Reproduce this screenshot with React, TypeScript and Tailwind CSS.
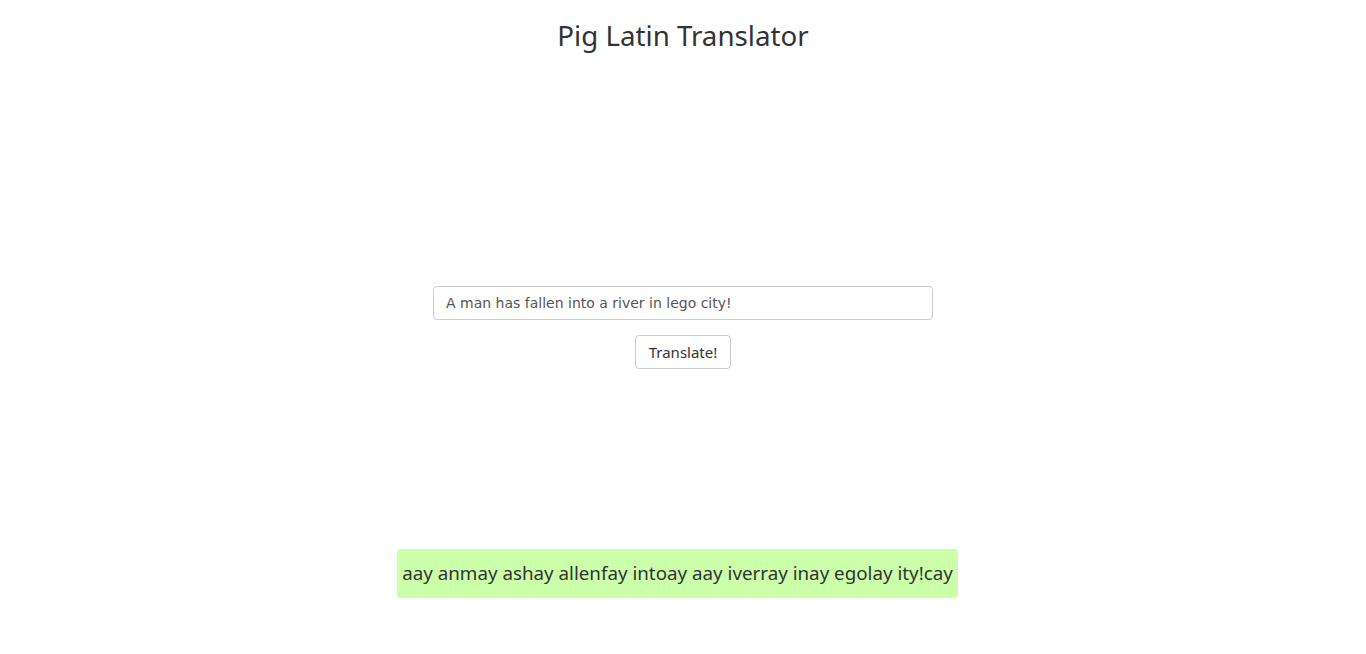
import React from "react";

export default function App() {
  const segoe = { fontFamily: '"Noto Sans", "Open Sans", sans-serif' };
  return (
    <div className="min-h-[654px] w-full bg-white text-[#333]" style={segoe}>
      <div className="flex flex-col items-center">
        <h1 className="mt-[15px] text-[27.7px] leading-[40px] font-normal text-[#333]">Pig Latin Translator</h1>
        <div className="mt-[231px] flex flex-col items-center">
          <input
            readOnly
            value="A man has fallen into a river in lego city!"
            className="h-[34px] w-[500px] rounded-[4px] border border-[#ccc] px-[12px] text-[14px] text-[#555] outline-none"
            style={{ fontFamily: '"DejaVu Sans", Verdana, sans-serif' }}
          />
          <button className="mt-[15px] h-[34px] w-[96px] rounded-[4px] border border-[#ccc] bg-white text-[15px] text-[#333]">
            Translate!
          </button>
        </div>
        <div className="mr-[11px] mt-[180px] flex h-[49px] items-center rounded-[3px] bg-[#ccffaa] px-[5px] text-[18.8px] text-[#333]">
          aay anmay ashay allenfay intoay aay iverray inay egolay ity!cay
        </div>
      </div>
    </div>
  );
}
